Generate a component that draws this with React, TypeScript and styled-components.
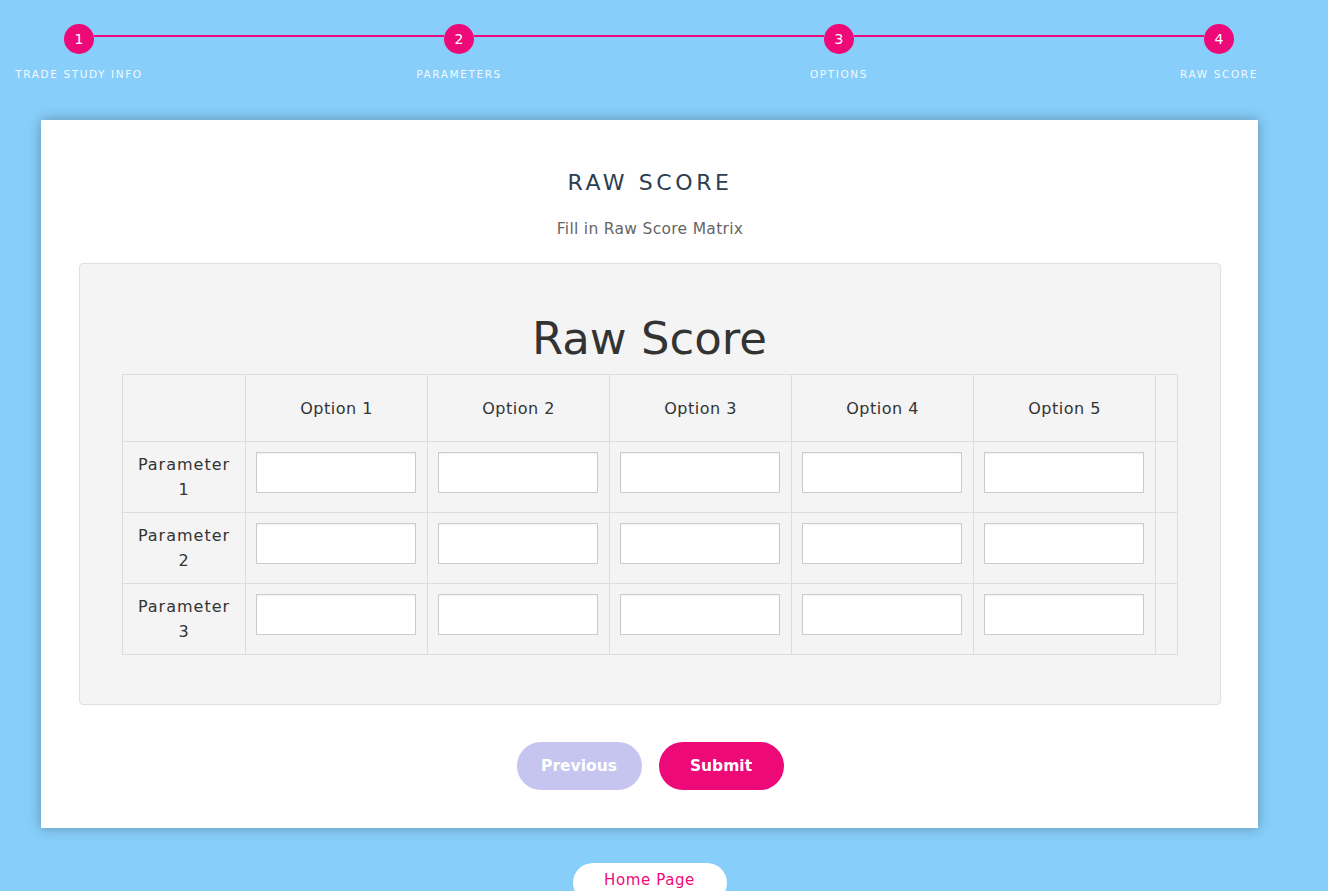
import React from "react";
import styled, { createGlobalStyle } from "styled-components";

const GlobalStyle = createGlobalStyle`
  html, body { margin: 0; padding: 0; }
  body {
    background: #87cefa;
    font-family: "DejaVu Sans", "Open Sans", sans-serif;
    overflow: hidden;
  }
  * { box-sizing: border-box; }
`;

const Page = styled.div`
  width: 1328px;
  height: 891px;
  padding-top: 24px;
`;

const Stepper = styled.ol`
  display: flex;
  gap: 222px;
  list-style: none;
  margin: 0;
  padding: 0;
`;

const Step = styled.li<{ $last?: boolean }>`
  position: relative;
  width: 158px;
  display: flex;
  flex-direction: column;
  align-items: center;
  &::after {
    content: "";
    display: ${(p) => (p.$last ? "none" : "block")};
    position: absolute;
    top: 11px;
    left: 94px;
    width: 350px;
    height: 2px;
    background: #ec0b7e;
  }
`;

const Circle = styled.span`
  width: 30px;
  height: 30px;
  border-radius: 50%;
  background: #ee0979;
  color: #fff;
  font-size: 14px;
  display: flex;
  align-items: center;
  justify-content: center;
`;

const StepLabel = styled.span`
  margin-top: 14px;
  color: #f4f9ff;
  font-size: 10.5px;
  letter-spacing: 1.6px;
  text-transform: uppercase;
  white-space: nowrap;
`;

const Card = styled.section`
  margin: 40px 0 0 41px;
  width: 1217px;
  height: 708px;
  background: #fff;
  box-shadow: 0 0 12px rgba(0, 0, 0, 0.3);
  padding: 50px 37px 0 38px;
  display: flex;
  flex-direction: column;
  align-items: center;
`;

const Title = styled.h2`
  margin: 0;
  font-size: 22px;
  font-weight: 400;
  letter-spacing: 3.6px;
  color: #2c3e50;
  text-transform: uppercase;
  line-height: 26px;
`;

const Subtitle = styled.p`
  margin: 23px 0 0;
  font-size: 15.5px;
  letter-spacing: 0.3px;
  color: #666;
  line-height: 20px;
`;

const Panel = styled.div`
  margin-top: 24px;
  width: 100%;
  background: #f4f4f4;
  border: 1px solid #e0e0e0;
  border-radius: 4px;
  padding: 49px 43px 49px 42px;
`;

const PanelHeading = styled.h1`
  margin: 0 0 9px;
  text-align: center;
  font-size: 45px;
  font-weight: 400;
  color: #333;
  line-height: 52px;
`;

const Table = styled.table`
  border-collapse: collapse;
  width: 1055px;
  table-layout: fixed;
  color: #333;
`;

const Th = styled.th<{ $w: number }>`
  width: ${(p) => p.$w}px;
  height: 67px;
  border: 1px solid #ddd;
  font-weight: 400;
  font-size: 16px;
  letter-spacing: 0.5px;
  text-align: center;
`;

const RowHead = styled.td`
  height: 71px;
  border: 1px solid #ddd;
  text-align: center;
  font-size: 16px;
  letter-spacing: 1px;
  line-height: 25px;
  padding: 0 8px;
`;

const Td = styled.td`
  border: 1px solid #ddd;
  padding: 10px 10px 0;
  vertical-align: top;
`;

const ScoreInput = styled.input`
  display: block;
  width: 160px;
  height: 41px;
  border: 1px solid #ccc;
  background: #fff;
  box-shadow: inset 0 1px 2px rgba(0, 0, 0, 0.06);
  outline: none;
`;

const Buttons = styled.div`
  margin-top: 37px;
  display: flex;
  gap: 17px;
`;

const Pill = styled.button<{ $variant: "muted" | "primary" }>`
  width: 125px;
  height: 48px;
  border: none;
  border-radius: 24px;
  background: ${(p) => (p.$variant === "primary" ? "#ee0979" : "#c5c5f0")};
  color: #fff;
  font-family: inherit;
  font-size: 15.5px;
  font-weight: 700;
  cursor: pointer;
`;

const Footer = styled.div`
  margin-left: 41px;
  width: 1217px;
  display: flex;
  justify-content: center;
  padding-top: 35px;
`;

const HomeButton = styled.button`
  width: 154px;
  height: 40px;
  border: none;
  border-radius: 20px;
  background: #fff;
  color: #ee0979;
  font-family: inherit;
  font-size: 15px;
  letter-spacing: 0.6px;
  padding-bottom: 8px;
  cursor: pointer;
`;

const steps = ["Trade Study Info", "Parameters", "Options", "Raw Score"];
const options = ["Option 1", "Option 2", "Option 3", "Option 4", "Option 5"];
const params = ["1", "2", "3"];

export default function App() {
  return (
    <Page>
      <GlobalStyle />
      <Stepper>
        {steps.map((s, i) => (
          <Step key={s} $last={i === steps.length - 1}>
            <Circle>{i + 1}</Circle>
            <StepLabel>{s}</StepLabel>
          </Step>
        ))}
      </Stepper>
      <Card>
        <Title>Raw Score</Title>
        <Subtitle>Fill in Raw Score Matrix</Subtitle>
        <Panel>
          <PanelHeading>Raw Score</PanelHeading>
          <Table>
            <thead>
              <tr>
                <Th $w={123} />
                {options.map((o) => (
                  <Th key={o} $w={182}>
                    {o}
                  </Th>
                ))}
                <Th $w={22} />
              </tr>
            </thead>
            <tbody>
              {params.map((p) => (
                <tr key={p}>
                  <RowHead>
                    Parameter
                    <br />
                    {p}
                  </RowHead>
                  {options.map((o) => (
                    <Td key={o}>
                      <ScoreInput type="text" />
                    </Td>
                  ))}
                  <Td />
                </tr>
              ))}
            </tbody>
          </Table>
        </Panel>
        <Buttons>
          <Pill $variant="muted">Previous</Pill>
          <Pill $variant="primary">Submit</Pill>
        </Buttons>
      </Card>
      <Footer>
        <HomeButton>Home Page</HomeButton>
      </Footer>
    </Page>
  );
}
